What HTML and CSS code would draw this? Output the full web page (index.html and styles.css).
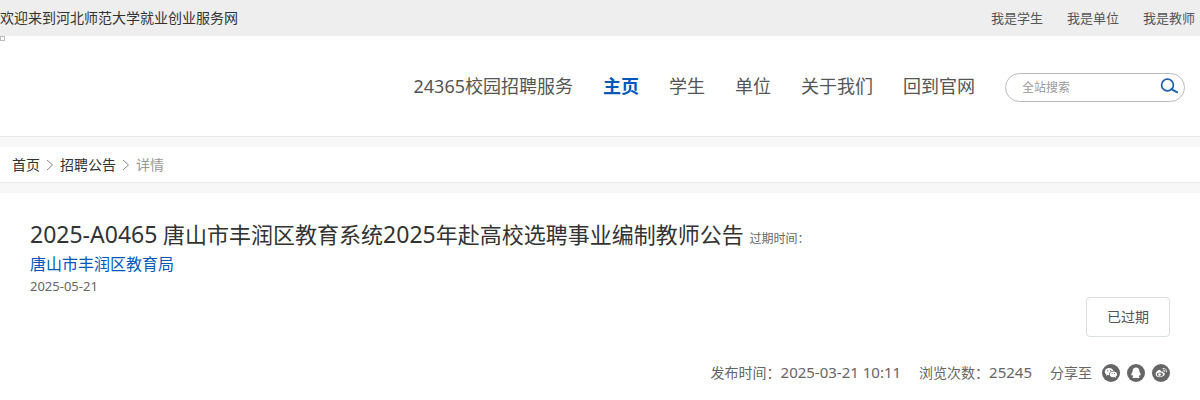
FILE: index.html
```html
<!DOCTYPE html>
<html lang="zh-CN">
  <head>
    <meta charset="UTF-8" />
    <meta name="viewport" content="width=device-width, initial-scale=1.0" />
    <title>招聘公告</title>
    <link rel="stylesheet" href="styles.css">
  </head>
  <body>
    <div class="topbar">
      <span class="welcome">欢迎来到河北师范大学就业创业服务网</span>
      <div class="login-links">
        <a href="#">我是学生</a>
        <a href="#">我是单位</a>
        <a href="#">我是教师</a>
      </div>
    </div>

    <header class="header">
      <a class="logo" href="#" aria-label="logo"></a>
      <nav class="nav">
        <a href="#">24365校园招聘服务</a>
        <a class="active" href="#">主页</a>
        <a href="#">学生</a>
        <a href="#">单位</a>
        <a href="#">关于我们</a>
        <a href="#">回到官网</a>
      </nav>
      <form class="search">
        <input type="text" placeholder="全站搜索" aria-label="全站搜索" />
        <button type="button" aria-label="搜索">
          <svg width="18" height="16" viewBox="0 0 18 16" fill="none" stroke="#1f5fae" stroke-width="1.7">
            <circle cx="7.500" cy="7" r="5.900" />
            <path d="M11.500 11 L13.500 12.300 L17 14.200" stroke-width="2" stroke-linecap="round" />
          </svg>
        </button>
      </form>
    </header>

    <nav class="breadcrumb">
      <a href="#">首页</a>
      <svg width="8" height="12" viewBox="0 0 8 12"><path d="M1 1 L6.500 6 L1 11" /></svg>
      <a href="#">招聘公告</a>
      <svg width="8" height="12" viewBox="0 0 8 12"><path d="M1 1 L6.500 6 L1 11" /></svg>
      <span>详情</span>
    </nav>

    <main class="detail">
      <h1 class="title"><span class="num">2025-A0465</span> 唐山市丰润区教育系统<span class="num">2025</span>年赴高校选聘事业编制教师公告 <small>过期时间：</small></h1>
      <a class="company" href="#">唐山市丰润区教育局</a>
      <div class="date">2025-05-21</div>
      <div class="actions">
        <button class="expired" type="button">已过期</button>
      </div>
      <div class="meta">
        <span>发布时间：<span class="num">2025-03-21 10:11</span></span>
        <span>浏览次数：<span class="num">25245</span></span>
        <div class="share">
          <span>分享至</span>
          <!-- wechat -->
          <a href="#" aria-label="微信">
            <svg width="18" height="18" viewBox="0 0 18 18">
              <circle cx="9" cy="9" r="9" fill="#666" />
              <path d="M7.300 4C4.800 4 2.800 5.600 2.800 7.700c0 1.100.6 2 1.500 2.700l-.4 1.400 1.700-.8 1.500.2c-.5-2.500 1.700-4.300 4.400-4.200C11 5.200 9.400 4 7.300 4Z" fill="#fff" />
              <path d="M11.400 7.500c-2.100 0-3.700 1.300-3.700 2.900s1.600 2.900 3.700 2.900l1.200-.2 1.400.8-.3-1.300c.8-.5 1.400-1.300 1.400-2.200 0-1.600-1.600-2.900-3.700-2.900Z" fill="#fff" />
              <g fill="#666"><circle cx="5.800" cy="6.700" r=".6" /><circle cx="8.600" cy="6.700" r=".6" /><circle cx="10.100" cy="9.600" r=".5" /><circle cx="12.500" cy="9.600" r=".5" /></g>
            </svg>
          </a>
          <!-- qq -->
          <a href="#" aria-label="QQ">
            <svg width="18" height="18" viewBox="0 0 18 18">
              <circle cx="9" cy="9" r="9" fill="#666" />
              <path d="M9 3.500C7 3.500 5.600 5 5.600 7c0 .8-.2 1.100-.7 1.900-.6.900-.8 2-.5 2.700.4 0 .8-.4 1-.8.100.7.400 1.200.9 1.700-.5.200-.8.500-.8.900 0 .9 2.500.9 3.500.3 1 .6 3.500.6 3.500-.3 0-.4-.3-.7-.8-.9.500-.5.800-1 .9-1.700.2.400.6.800 1 .8.300-.7.100-1.800-.5-2.700-.5-.8-.7-1.100-.7-1.900 0-2-1.400-3.500-3.400-3.500Z" fill="#fff" />
            </svg>
          </a>
          <!-- weibo -->
          <a href="#" aria-label="微博">
            <svg width="18" height="18" viewBox="0 0 18 18">
              <circle cx="9" cy="9" r="9" fill="#666" />
              <path d="M8.200 6.200C6.500 5.500 3.600 8 3.600 10.300c0 1.900 2 2.900 4.200 2.900 3 0 5-1.600 5-3.100 0-.9-.7-1.300-1.400-1.500.3-.9-.5-1.500-2.500-.8.200-.8 0-1.300-.7-1.600Z" fill="#fff" />
              <ellipse cx="7.900" cy="10.500" rx="2.900" ry="1.900" fill="#666" />
              <circle cx="7.500" cy="10.600" r="1.300" fill="#fff" />
              <path d="M11 4.500c2.100-.5 3.900 1.100 3.500 3.300M11.200 6.200c1.100-.2 1.800.5 1.600 1.500" fill="none" stroke="#fff" stroke-width=".9" stroke-linecap="round" />
            </svg>
          </a>
        </div>
      </div>
    </main>
  </body>
</html>
```
FILE: styles.css
```css
* {
  box-sizing: border-box;
}

body {
  margin: 0;
  font-family: "Noto Sans", "Noto Sans CJK SC", sans-serif;
  font-size: 14px;
  line-height: 20px;
  color: #333;
  background: #f7f7f7;
}

a {
  color: inherit;
  text-decoration: none;
}

.topbar {
  display: flex;
  justify-content: space-between;
  align-items: center;
  height: 36px;
  padding-right: 5px;
  background: #eee;
}

.login-links {
  display: flex;
  gap: 24px;
  font-size: 13px;
  color: #555;
}

/* Header with main menu and search */
.header {
  display: flex;
  align-items: center;
  gap: 30px;
  height: 101px;
  padding-right: 15px;
  background: #fff;
  border-bottom: 1px solid #eaeaea;
}

.logo {
  align-self: flex-start;
  width: 5px;
  height: 5px;
  margin-right: auto;
  border: 1px solid #bbb;
}

.nav {
  display: flex;
  gap: 30px;
  font-size: 18px;
  color: #555;
}

.nav .active {
  color: #0459b7;
  font-weight: bold;
}

.search {
  display: flex;
  align-items: center;
  width: 180px;
  height: 29px;
  margin-top: 2px;
  padding: 0 6px 0 16px;
  border: 1px solid #bbb;
  border-radius: 15px;
}

.search input {
  flex: 1;
  min-width: 0;
  padding: 2px 0 0;
  border: 0;
  outline: none;
  background: none;
  font: inherit;
  font-size: 12px;
}

.search input::placeholder {
  color: #999;
}

.search button {
  display: flex;
  padding: 0 0 2px;
  border: 0;
  background: none;
}

.breadcrumb {
  display: flex;
  align-items: center;
  gap: 6px;
  height: 36px;
  margin: 10px 0;
  padding: 0 12px;
  background: #fff;
  border-bottom: 1px solid #eaeaea;
}

.breadcrumb svg {
  fill: none;
  stroke: #888;
}

.breadcrumb span {
  color: #999;
}

/* Announcement */
.detail {
  min-height: calc(100vh - 193px);
  padding: 27px 30px 18px;
  background: #fff;
}

.title {
  margin: 0;
  font-size: 22px;
  font-weight: normal;
  line-height: 28px;
}

.title .num {
  font-size: 23px;
}

.title small {
  font-size: 12px;
  color: #666;
}

.company {
  display: block;
  font-size: 16px;
  line-height: 22px;
  color: #0459b7;
}

.date {
  font-size: 13px;
  line-height: 22px;
  color: #666;
}

.actions {
  display: flex;
  justify-content: flex-end;
}

.expired {
  height: 40px;
  padding: 0 20px;
  border: 1px solid #dcdfe0;
  border-radius: 4px;
  background: #fff;
  font: inherit;
  color: #555;
}

.meta {
  display: flex;
  justify-content: flex-end;
  align-items: center;
  gap: 18px;
  margin-top: 25px;
  color: #666;
}

.meta .num {
  font-size: 15px;
}

.share {
  display: flex;
  align-items: center;
  gap: 7px;
}

.share span {
  margin-right: 3px;
}

.share a {
  display: flex;
}
```
